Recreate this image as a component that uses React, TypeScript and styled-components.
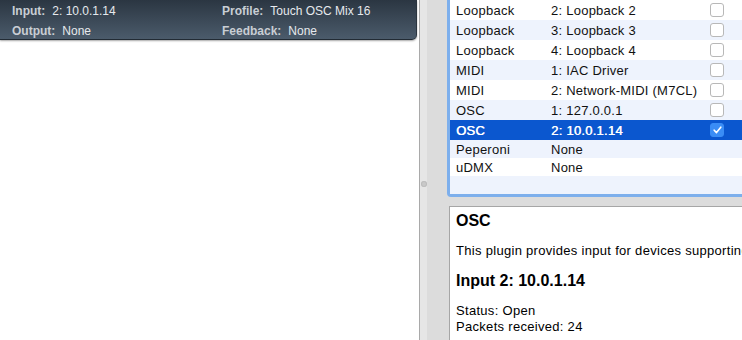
import React from 'react'
import styled, { createGlobalStyle } from 'styled-components'

const GlobalStyle = createGlobalStyle`
  html, body {
    margin: 0;
    padding: 0;
    background: #ffffff;
  }
  body {
    font-family: 'Liberation Sans', Arial, sans-serif;
    -webkit-font-smoothing: antialiased;
  }
`

const Window = styled.div`
  display: flex;
  width: 742px;
  height: 340px;
  overflow: hidden;
`

const LeftPane = styled.section`
  width: 419px;
  flex-shrink: 0;
  background: #ffffff;
`

const StatusHeader = styled.header`
  display: grid;
  grid-template-columns: 210px 1fr;
  width: 417px;
  height: 40px;
  box-sizing: border-box;
  padding: 1px 0 0 12px;
  background: linear-gradient(#2b3642, #4b5b6b);
  border-bottom: 1px solid #222b34;
  border-right: 1px solid #2a343e;
  border-bottom-right-radius: 5px;
  box-shadow: 0 1px 2px rgba(0, 0, 0, 0.35);
  font-size: 12px;
  line-height: 20px;
  color: #e6e9ed;
`

const StatusItem = styled.div`
  white-space: nowrap;
`

const StatusLabel = styled.span`
  font-weight: 700;
  color: #c9ced4;
`

const StatusValue = styled.span`
  margin-left: 7px;
`

const Splitter = styled.div`
  width: 7px;
  flex-shrink: 0;
  border-left: 1px solid #a9a9a9;
  background: #e6e6e6;
  display: flex;
  justify-content: center;
  padding-top: 181px;
  box-sizing: content-box;
`

const SplitterDot = styled.div`
  width: 6px;
  height: 6px;
  border-radius: 50%;
  background: #c9c9c9;
  box-shadow: inset 0 0 0 1px #bdbdbd;
`

const RightPane = styled.section`
  flex: 1;
  display: flex;
  flex-direction: column;
  padding-left: 20px;
  background: #dcdcdc;
  min-width: 0;
`

const DeviceList = styled.div`
  display: flex;
  flex-direction: column;
  width: 320px;
  border-left: 3px solid #7dafec;
  border-bottom: 3px solid #7dafec;
  border-bottom-left-radius: 4px;
  background: #ffffff;
  font-size: 13px;
  letter-spacing: 0.25px;
  color: #111111;
`

const Row = styled.div<{ $alt: boolean; $selected: boolean; $tall: boolean }>`
  display: flex;
  align-items: center;
  height: ${(p) => (p.$tall ? 20 : 18)}px;
  padding-left: 6px;
  background: ${(p) => (p.$selected ? '#0b57cf' : p.$alt ? '#eef3fd' : '#ffffff')};
  color: ${(p) => (p.$selected ? '#ffffff' : '#111111')};
  text-shadow: ${(p) => (p.$selected ? '0.45px 0 0 #ffffff' : 'none')};
`

const Filler = styled.div`
  height: 18px;
  background: #eef3fd;
`

const PluginCell = styled.span`
  width: 95px;
  flex-shrink: 0;
`

const NameCell = styled.span`
  width: 159px;
  flex-shrink: 0;
  white-space: nowrap;
`

const CheckBox = styled.span<{ $checked: boolean }>`
  display: flex;
  align-items: center;
  justify-content: center;
  width: 14px;
  height: 14px;
  box-sizing: border-box;
  border-radius: 3px;
  border: 1px solid ${(p) => (p.$checked ? '#3a8df5' : '#b8b8b8')};
  background: ${(p) => (p.$checked ? '#3a8df5' : '#ffffff')};
`

const DetailBox = styled.div`
  flex: 1;
  margin: 9px 0 0 2px;
  padding: 4px 0 0 6px;
  border: 1px solid #a6a6a6;
  border-right: none;
  border-bottom: none;
  background: #ffffff;
  color: #000000;
  white-space: nowrap;
  overflow: hidden;
`

const DetailTitle = styled.h2<{ $gap?: number }>`
  margin: ${(p) => p.$gap ?? 0}px 0 0;
  font-size: 16px;
  line-height: 20px;
  font-weight: 700;
`

const DetailText = styled.p<{ $gap?: number }>`
  margin: ${(p) => p.$gap ?? 0}px 0 0;
  font-size: 13px;
  line-height: 16px;
  letter-spacing: 0.3px;
`

interface Device {
  plugin: string
  name: string
  hasBox: boolean
  checked?: boolean
  selected?: boolean
}

const devices: Device[] = [
  { plugin: 'Loopback', name: '2: Loopback 2', hasBox: true },
  { plugin: 'Loopback', name: '3: Loopback 3', hasBox: true },
  { plugin: 'Loopback', name: '4: Loopback 4', hasBox: true },
  { plugin: 'MIDI', name: '1: IAC Driver', hasBox: true },
  { plugin: 'MIDI', name: '2: Network-MIDI (M7CL)', hasBox: true },
  { plugin: 'OSC', name: '1: 127.0.0.1', hasBox: true },
  { plugin: 'OSC', name: '2: 10.0.1.14', hasBox: true, checked: true, selected: true },
  { plugin: 'Peperoni', name: 'None', hasBox: false },
  { plugin: 'uDMX', name: 'None', hasBox: false },
]

const CheckMark = () => (
  <svg width="9" height="8" viewBox="0 0 9 8">
    <path d="M1.2 4.2 L3.5 6.6 L7.8 1.2" fill="none" stroke="#ffffff" strokeWidth="1.6" strokeLinecap="round" strokeLinejoin="round" />
  </svg>
)

const App: React.FC = () => (
  <Window>
    <GlobalStyle />
    <LeftPane>
      <StatusHeader>
        <StatusItem>
          <StatusLabel>Input:</StatusLabel>
          <StatusValue>2: 10.0.1.14</StatusValue>
        </StatusItem>
        <StatusItem>
          <StatusLabel>Profile:</StatusLabel>
          <StatusValue>Touch OSC Mix 16</StatusValue>
        </StatusItem>
        <StatusItem>
          <StatusLabel>Output:</StatusLabel>
          <StatusValue>None</StatusValue>
        </StatusItem>
        <StatusItem>
          <StatusLabel>Feedback:</StatusLabel>
          <StatusValue>None</StatusValue>
        </StatusItem>
      </StatusHeader>
    </LeftPane>
    <Splitter>
      <SplitterDot />
    </Splitter>
    <RightPane>
      <DeviceList>
        {devices.map((d, i) => (
          <Row key={i} $alt={i % 2 === 1} $selected={!!d.selected} $tall={d.hasBox}>
            <PluginCell>{d.plugin}</PluginCell>
            <NameCell>{d.name}</NameCell>
            {d.hasBox && <CheckBox $checked={!!d.checked}>{d.checked && <CheckMark />}</CheckBox>}
          </Row>
        ))}
        <Filler />
      </DeviceList>
      <DetailBox>
        <DetailTitle>OSC</DetailTitle>
        <DetailText $gap={12}>
          This plugin provides input for devices supporting the OpenSound Control transmission protocol.
        </DetailText>
        <DetailTitle $gap={12}>Input 2: 10.0.1.14</DetailTitle>
        <DetailText $gap={12}>Status: Open</DetailText>
        <DetailText>Packets received: 24</DetailText>
      </DetailBox>
    </RightPane>
  </Window>
)

export default App
